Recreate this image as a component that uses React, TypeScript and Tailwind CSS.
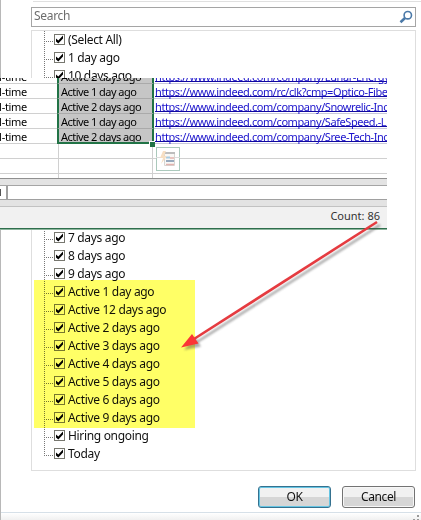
const items = [
  '(Select All)', '1 day ago', '10 days ago', '11 days ago', '12 days ago', '13 days ago',
  '14 days ago', '2 days ago', '3 days ago', '4 days ago', '5 days ago', '7 days ago',
  '8 days ago', '9 days ago', 'Active 1 day ago', 'Active 12 days ago', 'Active 2 days ago',
  'Active 3 days ago', 'Active 4 days ago', 'Active 5 days ago', 'Active 6 days ago',
  'Active 9 days ago', 'Hiring ongoing', 'Today',
];

// Rows 3 to 10 lie entirely behind the worksheet strip.
const isCovered = (i: number) => i > 2 && i < 11;

const sheetRows = [
  ['Active 2 days ago', 'https://www.indeed.com/company/Lunar-Energy,'],
  ['Active 1 day ago', 'https://www.indeed.com/rc/clk?cmp=Optico-Fiber'],
  ['Active 2 days ago', 'https://www.indeed.com/company/Snowrelic-Inc'],
  ['Active 1 day ago', 'https://www.indeed.com/company/SafeSpeed,-LLC'],
  ['Active 2 days ago', 'https://www.indeed.com/company/Sree-Tech-Inc'],
];

function CheckRow({ label, last }: { label: string; last: boolean }) {
  return (
    <div className="flex h-[18px] items-start">
      <svg width="10" height="18" className="shrink-0" shapeRendering="crispEdges">
        <path d={last ? 'M.5 0V11' : 'M.5 0V18'} stroke="#777" strokeDasharray="1 1" />
        <path d="M0 10.5H9" stroke="#777" strokeDasharray="1 1" />
      </svg>
      <svg width="11" height="11" className="mt-[3px] shrink-0">
        <rect x=".5" y=".5" width="10" height="10" fill="#fff" fillOpacity=".65" stroke="#77776f" />
        <path d="M2 4.5v3L4.3 9.5 9 4.5v-3L4.3 6.5z" fill="#000" />
      </svg>
      <span className="ml-[3px] text-[12px] leading-[18px] tracking-[-0.33px] whitespace-pre text-[#111]">{label}</span>
    </div>
  );
}

function Worksheet() {
  return (
    <div className="absolute top-[78px] left-0 h-[152px] w-[387px] overflow-hidden bg-white">
      <div className="relative mt-[-9px] flex flex-col text-[11px] leading-[15px] text-black">
        {sheetRows.map(([age, url], i) => (
          <div key={i} className="flex h-[15px]">
            <div className="relative w-[57px] border-b border-[#d0d0d0]">
              <span className="absolute right-[30px] whitespace-nowrap tracking-[-0.3px]">Full-time</span>
            </div>
            <div className="w-[97px] border-x-2 border-b border-x-[#217346] border-b-[#aaa] bg-[#c6c6c6] pl-[2px] whitespace-nowrap tracking-[-0.54px]">{age}</div>
            <div className="w-[233px] border-b border-[#c8c8dc] pl-[1px] whitespace-nowrap tracking-[-0.42px] text-[#1a12cc]">
              <span className="inline-block h-[13px] border-b border-[#1008a0]">{url}</span>
            </div>
          </div>
        ))}
        {[0, 1].map((i) => (
          <div key={i} className="flex h-[15px] border-b border-[#d0d0d0]">
            <div className="w-[59px] border-r border-[#d0d0d0]" />
            <div className="w-[94px] border-r border-[#d0d0d0]" />
          </div>
        ))}
        <div className="flex h-[4px]">
          <div className="w-[59px] border-r border-[#d0d0d0]" />
          <div className="w-[94px] border-r border-[#d0d0d0]" />
        </div>
        <div className="absolute top-[73px] left-[57px] h-[2px] w-[95px] bg-[#217346]" />
        <div className="absolute top-[72px] left-[149px] size-[6px] border-t border-l border-white bg-[#217346]" />
      </div>
      <div className="h-[8px] border-y border-t-[#909090] border-b-[#a5a5a5] bg-[#e3e3e3]" />
      <div className="flex h-[13px] items-center">
        <div className="h-[7px] w-px bg-[#555]" />
        <div className="ml-[5px] h-full w-[2px] bg-[#a0a0a0]" />
      </div>
      <div className="h-[8px] border-y border-t-[#a0a0a0] border-b-[#c2c2c2] bg-[#e3e3e3]" />
      <div className="flex h-[21px] items-center justify-end bg-[#f1f1f1] pr-[7px] pb-[2px] text-[11px] text-[#333]">Count: 86</div>
      <div className="h-[2px] border-b border-[#8cb59d] bg-[#2f6e4c]" />
      <svg className="absolute top-[69px] left-[156px]" width="24" height="24">
        <rect x=".5" y=".5" width="23" height="23" fill="#fff" stroke="#abc9bc" />
        <path d="M0 10.5h24" stroke="#ddd" />
        <path d="M8.5 5.5h10v13h-10z" fill="#f9f8f6" stroke="#d8d6d2" />
        <path d="M9 6h10" stroke="#bdbdbd" strokeWidth="2" />
        <path d="M10 10.5h4" stroke="#a9cbe0" strokeWidth="2" />
        <path d="M10 14h8" stroke="#97a9bd" strokeWidth="2" />
        <path d="M14 11h4M10 17.5h8" stroke="#e3b3af" strokeWidth="1.5" />
        <path d="M7 4 4 11h3l-2 6 6-8H8l2-5z" fill="#f7dfc3" />
      </svg>
    </div>
  );
}

export default function App() {
  return (
    <div className="relative flex h-[520px] w-[421px] flex-col border-l border-[#b8b8b8] bg-white font-['Noto_Sans','Open_Sans',sans-serif]">
      <div className="mt-px ml-[32px] h-px shrink-0 bg-[#e0e0e0]" />
      <div className="mt-[5px] ml-[30px] flex h-[20px] w-[385px] shrink-0 items-center justify-between border border-[#a5a5a5] pl-[2px] pr-[2px]">
        <span className="pb-[2px] text-[12px] leading-[16px] tracking-[-0.3px] text-[#6d6d6d]">Search</span>
        <svg width="14" height="14" fill="none" stroke="#4b79a8">
          <circle cx="8.8" cy="5.2" r="3.7" strokeWidth="1.6" />
          <path d="M6 8 1.5 12.2" strokeWidth="2.6" />
        </svg>
      </div>
      <div className="mt-[3px] ml-[30px] h-[441px] w-[385px] shrink-0 border border-[#dedede] pl-[12px]">
        {items.map((label, i) =>
          isCovered(i) ? <div key={i} className="h-[18px]" /> : <CheckRow key={i} label={label} last={i === items.length - 1} />
        )}
      </div>
      <div className="mt-[15px] flex h-[22px] shrink-0 justify-end gap-[11px] pr-[6px] text-[12px] leading-[18px] text-[#111]">
        <button className="w-[73px] rounded-[3px] border border-[#35718f] bg-linear-to-b from-[#f1f1f1] from-50% to-[#d6d6d6] to-50% pb-px tracking-[-0.4px] shadow-[inset_0_0_0_1px_#66c5e3]">OK</button>
        <button className="w-[73px] rounded-[3px] border border-[#737373] bg-linear-to-b from-[#f1f1f1] from-50% to-[#d6d6d6] to-50% pb-px tracking-[-0.4px] shadow-[inset_0_0_0_1px_#f7f7f7]">Cancel</button>
      </div>
      <div className="mt-[4px] h-[8px] shrink-0 border-t border-[#d6e0e8] bg-linear-to-b from-white to-[#f0f0f0]" />
      <div className="absolute top-[280px] left-[33px] h-[148px] w-[161px] bg-[#ffff66] mix-blend-multiply" />
      <div className="absolute top-0 -left-px h-full w-[421px]">
        <Worksheet />
        <svg className="absolute inset-0" width="421" height="520">
          <defs>
            <filter id="soft" x="-10%" y="-10%" width="120%" height="120%">
              <feGaussianBlur stdDeviation="1.3" />
            </filter>
          </defs>
          <g transform="translate(3 3)" filter="url(#soft)" opacity=".45">
            <path d="M377 222 194 339" stroke="#444" strokeWidth="2.5" />
            <path d="M181 347 192 334 198 343.5z" fill="#444" />
          </g>
          <path d="M377 222 194 339" stroke="#e53b40" strokeWidth="2.6" />
          <path d="M181 347.5 192 334 198.5 343.5z" fill="#fb3535" />
          <path d="M417 515h2v2h-2zM417 519h2v1h-2zM413 519h2v1h-2z" fill="#999" />
        </svg>
      </div>
    </div>
  );
}
